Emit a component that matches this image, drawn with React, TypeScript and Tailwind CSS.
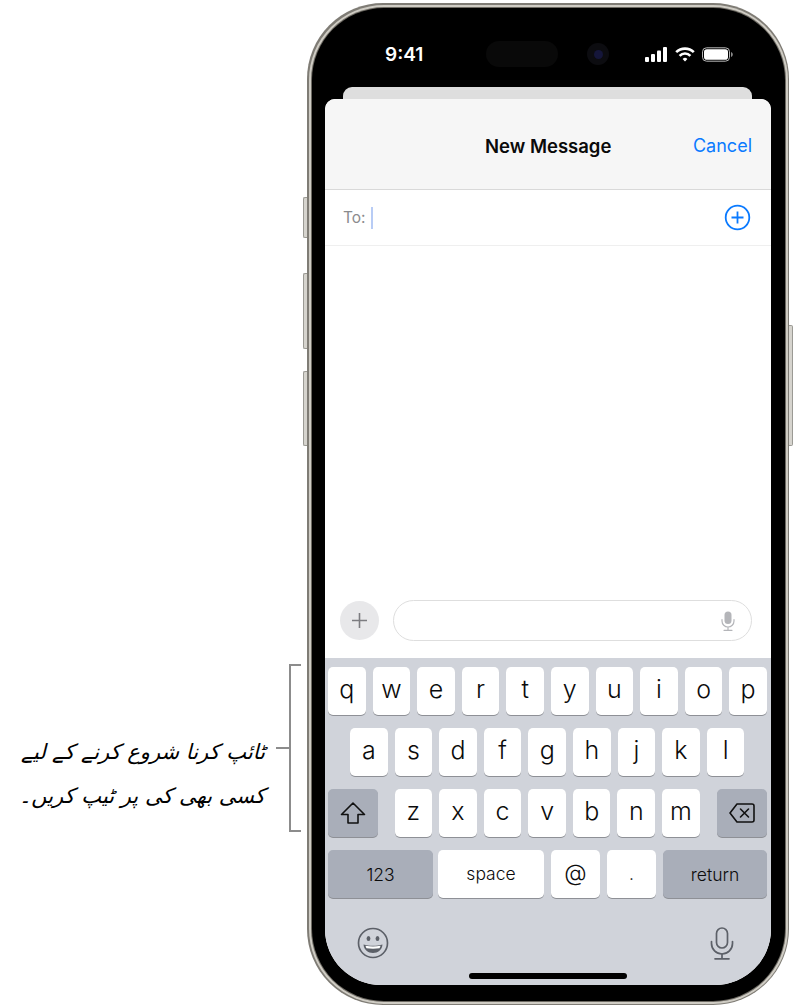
import React from 'react';

const sans = 'font-["Inter","Liberation_Sans",sans-serif]';

const Key: React.FC<{ className?: string; children?: React.ReactNode }> = ({ className = '', children }) => (
  <div className={`h-[47.5px] rounded-[5px] bg-white shadow-[0_1px_0_#8e9096] flex items-center justify-center text-[#0b0b0b] ${className}`}>
    {children}
  </div>
);

const LetterRow: React.FC<{ letters: string; className?: string }> = ({ letters, className = '' }) => (
  <div className={`flex gap-[7px] ${className}`}>
    {letters.split('').map(l => (
      <Key key={l} className="w-[37.6px] pb-[3px] text-[25px] font-light">{l}</Key>
    ))}
  </div>
);

const StatusIcons = () => (
  <div className="flex items-center gap-[7px]">
    <svg width="23" height="15" viewBox="0 0 23 15" fill="white">
      <rect x="0" y="10" width="4" height="5" rx="1" />
      <rect x="6" y="7" width="4" height="8" rx="1" />
      <rect x="12" y="3.5" width="4" height="11.5" rx="1" />
      <rect x="18" y="0" width="4" height="15" rx="1" />
    </svg>
    <svg width="20" height="15" viewBox="0 0 20 15" fill="none" stroke="white" strokeWidth="2.6">
      <path d="M1.2 5.2a12.5 12.5 0 0 1 17.6 0" />
      <path d="M4.6 8.8a7.6 7.6 0 0 1 10.8 0" />
      <path d="M10 14.6 7.6 12a3.4 3.4 0 0 1 4.8 0Z" fill="white" stroke="none" />
    </svg>
    <svg width="31" height="15" viewBox="0 0 31 15" fill="none">
      <rect x="0.5" y="0.8" width="27" height="13.4" rx="4" stroke="#b8b8b8" />
      <rect x="2" y="2.3" width="24" height="10.4" rx="2.8" fill="white" />
      <path d="M29 5v5c1.2-.4 1.8-1.4 1.8-2.5S30.200 5.400 29 5Z" fill="#8a8a8a" />
    </svg>
  </div>
);

const ShiftIcon = () => (
  <svg width="26" height="24" viewBox="0 0 26 24" fill="none" stroke="#111" strokeWidth="1.6" strokeLinejoin="round">
    <path d="M13 2 1.500 13.500h6.500V22h10v-8.500h6.500Z" />
  </svg>
);

const DeleteIcon = () => (
  <svg width="26" height="20" viewBox="0 0 26 20" fill="none" stroke="#111" strokeWidth="1.6" strokeLinejoin="round" strokeLinecap="round">
    <path d="M8 1h15a2 2 0 0 1 2 2v14a2 2 0 0 1-2 2H8L1 10Z" />
    <path d="m11.500 6 8 8m0-8-8 8" />
  </svg>
);

const EmojiIcon = () => (
  <svg width="32" height="32" viewBox="0 0 32 32" fill="none">
    <circle cx="16" cy="16" r="14.500" stroke="#5c6068" strokeWidth="1.7" />
    <ellipse cx="11.500" cy="11.500" rx="1.900" ry="2.600" fill="#5c6068" />
    <ellipse cx="20.500" cy="11.500" rx="1.900" ry="2.600" fill="#5c6068" />
    <path d="M6.500 17.500c3 .9 6 1.300 9.500 1.300s6.500-.4 9.500-1.300c-.5 5.500-4.500 8.500-9.500 8.500s-9-3-9.500-8.500Z" fill="#5c6068" />
    <path d="M8.500 18.800c2.500.5 5 .7 7.500.7s5-.2 7.500-.7c-.2 1-.5 1.700-1 2.400-2 .3-4.300.5-6.500.5s-4.500-.2-6.500-.5c-.5-.7-.8-1.400-1-2.400Z" fill="#fff" />
  </svg>
);

const DictationIcon = () => (
  <svg width="24" height="33" viewBox="0 0 24 33" fill="none" stroke="#5c6068" strokeWidth="1.700" strokeLinecap="round">
    <rect x="6.500" y="1" width="11" height="20" rx="5.500" />
    <path d="M1.500 14.500v2a10.500 10.500 0 0 0 21 0v-2" />
    <path d="M12 27v4.500M5 31.800h14" />
  </svg>
);

const SmallMic = () => (
  <svg width="14" height="20" viewBox="0 0 14 20">
    <rect x="3.500" y="0.500" width="7" height="12.500" rx="3.500" fill="#b4b5b9" />
    <path d="M1 8.500v1.500a6 6 0 0 0 12 0V8.500M7 16v3M3 19.300h8" fill="none" stroke="#b4b5b9" strokeWidth="1.200" strokeLinecap="round" />
  </svg>
);

const Annotation = () => (
  <div className="w-[303px] shrink-0 pt-[664px] flex items-start">
    <div className="w-[276px] h-[168px] pr-[11px] pt-[66px]">
      <p dir="rtl" lang="ur" className='font-["DejaVu_Sans",serif] italic text-[21px] leading-[44px] text-black text-start whitespace-nowrap'>
        ٹائپ کرنا شروع کرنے کے لیے
        <br />
        کسی بھی کی پر ٹیپ کریں۔
      </p>
    </div>
    <div className="w-[13px] h-[168px] flex items-center">
      <div className="w-full h-[2px] bg-[#8c8c8c]" />
    </div>
    <div className="w-[12px] h-[168px] border-l-2 border-y-2 border-[#8c8c8c]" />
  </div>
);

export default function App() {
  return (
    <div className={`w-[793px] h-[1008px] bg-white flex overflow-hidden ${sans}`}>
      <Annotation />

      {/* left side buttons */}
      <div className="w-[4px] shrink-0 pt-[197px] flex flex-col">
        <div className="h-[41px] rounded-l-[2px] bg-[#d6d4ce] border border-r-0 border-[#9b9a94]" />
        <div className="h-[76px] mt-[35px] rounded-l-[2px] bg-[#d6d4ce] border border-r-0 border-[#9b9a94]" />
        <div className="h-[75px] mt-[22px] rounded-l-[2px] bg-[#d6d4ce] border border-r-0 border-[#9b9a94]" />
      </div>

      <div className="w-[482px] h-[1002px] mt-[3px] shrink-0 rounded-[76px] p-[1.500px] bg-[#7f7c75]">
        <div className="h-full rounded-[75px] p-[2px] bg-[#cfccc4]">
          <div className="h-full rounded-[73px] p-[1px] bg-[#6d6a63]">
            <div className="h-full rounded-[72px] bg-black px-[13.500px] pb-[15.500px] flex flex-col">
              {/* status bar */}
              <div className="h-[91.500px] shrink-0 flex flex-col items-stretch">
                <div className="h-[79.500px] flex items-center pt-[14px]">
                  <span className="w-[39px] ml-[60px] text-white text-[19px] font-semibold leading-none whitespace-nowrap">9:41</span>
                  <div className="w-[72px] h-[26px] ml-[62px] rounded-full bg-[#090909]" />
                  <div className="w-[22px] h-[22px] ml-[29px] rounded-full bg-[#0c0c10] flex items-center justify-center">
                    <div className="w-[9px] h-[9px] rounded-full bg-[#15163a]" />
                  </div>
                  <div className="ml-[36px]">
                    <StatusIcons />
                  </div>
                </div>
                <div className="h-[12px] mx-[18px] mr-[19px] rounded-t-[9px] bg-[#dedede]" />
              </div>

              {/* screen */}
              <div className="flex-1 min-h-0 rounded-t-[10px] rounded-b-[56px] overflow-hidden bg-white flex flex-col">
                <div className="h-[91px] shrink-0 bg-[#f6f6f6] border-b border-[#d9d9d9] flex items-start justify-between pt-[33px] pl-[160px] pr-[19px]">
                  <span className="text-[18.500px] leading-[28px] font-semibold text-[#0a0a0a]">New Message</span>
                  <span className="text-[18px] leading-[28px] text-[#0a7aff]">Cancel</span>
                </div>

                <div className="h-[56px] shrink-0 border-b border-[#efefef] flex items-center pl-[18px] pr-[20px]">
                  <span className="text-[15.500px] text-[#8b8b8e]">To:</span>
                  <div className="w-[2px] h-[22px] ml-[5px] bg-[#b8ccf5]" />
                  <svg className="ml-auto" width="27" height="27" viewBox="0 0 27 27" fill="none" stroke="#0a7aff" strokeWidth="1.800">
                    <circle cx="13.500" cy="13.500" r="11.800" />
                    <path d="M13.500 7.500v12M7.500 13.500h12" />
                  </svg>
                </div>

                <div className="flex-1" />

                <div className="h-[58px] shrink-0 flex items-start pl-[15px] pr-[19px]">
                  <div className="w-[39px] h-[39px] mt-[1px] rounded-full bg-[#e8e8ea] flex items-center justify-center">
                    <svg width="17" height="17" viewBox="0 0 17 17" fill="none" stroke="#7c7c80" strokeWidth="1.600">
                      <path d="M8.500 1v15M1 8.500h15" />
                    </svg>
                  </div>
                  <div className="ml-[14px] flex-1 h-[41px] rounded-full border border-[#dedede] flex items-center justify-end pr-[16px]">
                    <SmallMic />
                  </div>
                </div>

                {/* keyboard */}
                <div className="h-[327px] shrink-0 bg-[#d0d3da] flex flex-col">
                  <div className="px-[3px] pt-[9px] flex flex-col gap-[13.500px]">
                    <LetterRow letters="qwertyuiop" />
                    <LetterRow letters="asdfghjkl" className="pl-[22px]" />
                    <div className="flex">
                      <Key className="w-[50px] !bg-[#a9aeb9]"><ShiftIcon /></Key>
                      <LetterRow letters="zxcvbnm" className="ml-[16.500px]" />
                      <Key className="w-[50px] ml-[17px] !bg-[#a9aeb9]"><DeleteIcon /></Key>
                    </div>
                    <div className="flex text-[17.500px] font-light">
                      <Key className="w-[105px] pt-[2px] !bg-[#a9aeb9]">123</Key>
                      <Key className="w-[106px] ml-[5px]">space</Key>
                      <Key className="w-[49px] ml-[7px] text-[23px] pb-[1px]">@</Key>
                      <Key className="w-[49px] ml-[7px]">.</Key>
                      <Key className="w-[104px] ml-[7px] pt-[2px] !bg-[#a9aeb9]">return</Key>
                    </div>
                  </div>
                  <div className="flex items-center justify-between pl-[32px] pr-[37px] mt-[29px]">
                    <EmojiIcon />
                    <DictationIcon />
                  </div>
                  <div className="w-[158px] h-[6px] mt-[13.500px] mx-auto rounded-full bg-black" />
                </div>
              </div>
            </div>
          </div>
        </div>
      </div>

      {/* right side button */}
      <div className="w-[4px] shrink-0 pt-[325px]">
        <div className="h-[121px] rounded-r-[2px] bg-[#d6d4ce] border border-l-0 border-[#9b9a94]" />
      </div>
    </div>
  );
}
